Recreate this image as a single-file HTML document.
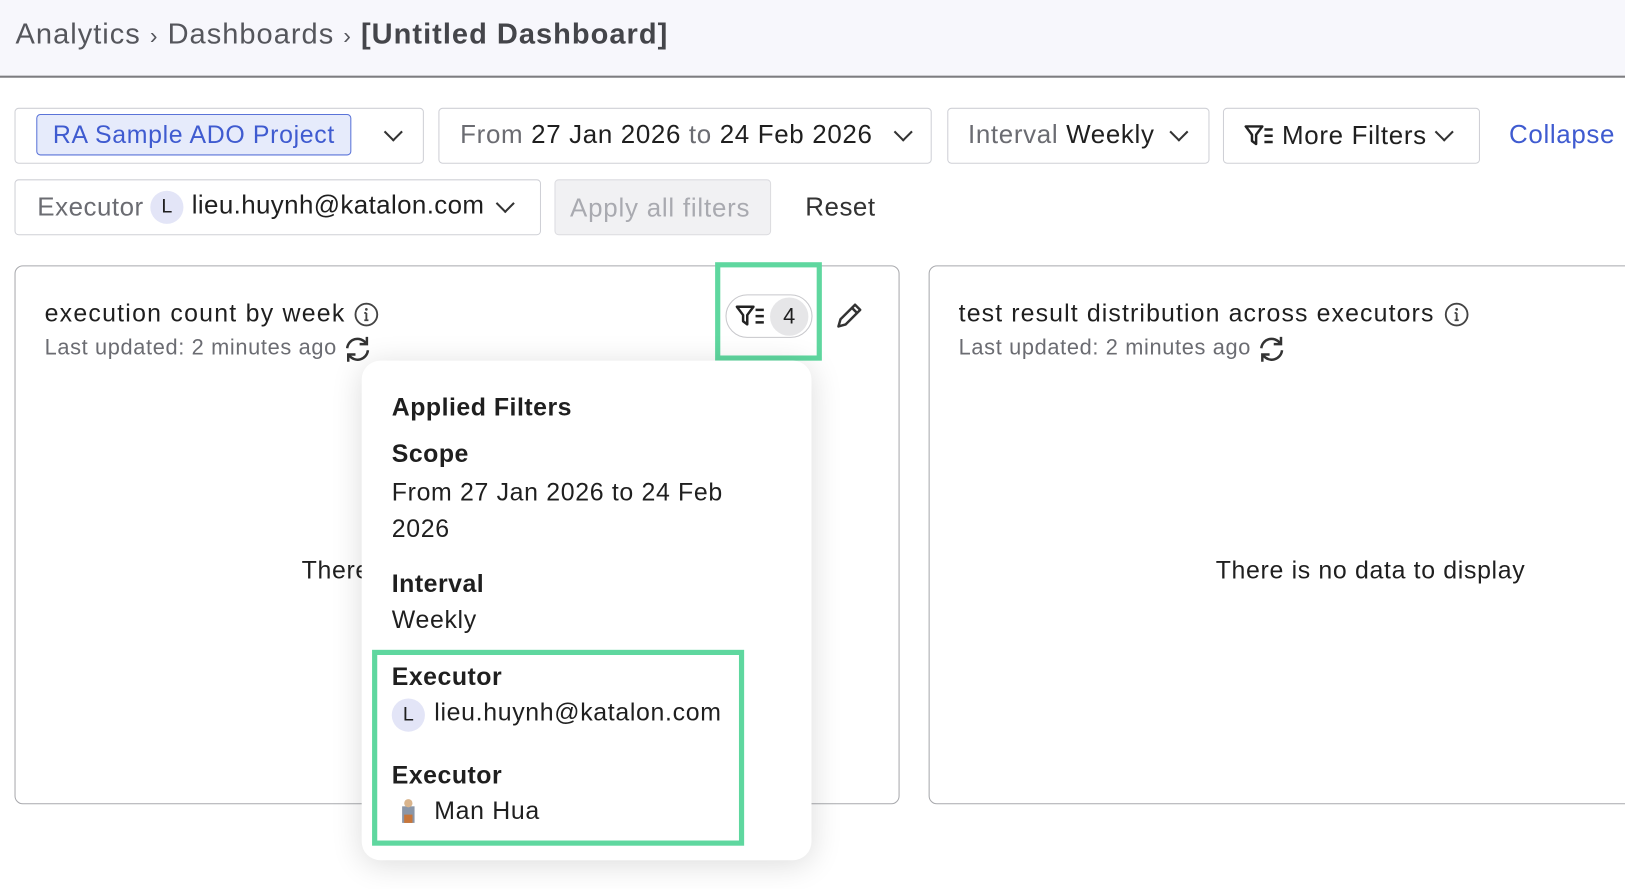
<!DOCTYPE html>
<html><head><meta charset="utf-8"><style>
html,body{margin:0;padding:0;width:1625px;height:889px;overflow:hidden;background:#fff;}
#w{position:absolute;left:0;top:0;width:1568px;height:858px;transform:scale(1.0364);transform-origin:0 0;font-family:"Liberation Sans",sans-serif;color:#1f1f1f;letter-spacing:0.04em;}
.a{position:absolute;white-space:nowrap;}
.box{position:absolute;border:1px solid #cfd0d6;border-radius:4px;background:#fff;box-sizing:border-box;}
.chev{position:absolute;width:11px;height:11px;border-right:2px solid #333;border-bottom:2px solid #333;transform:rotate(45deg);}
.g{color:#6b6c72}
</style></head><body><div id="w">
<div class="a" style="left:0;top:0;width:1568px;height:73px;background:#f7f7fc;border-bottom:2px solid #7d7d80;"></div>
<div class="a" style="left:15px;top:17px;font-size:28px;color:#55565c;letter-spacing:0.035em">Analytics <span style="font-size:22px">›</span> Dashboards <span style="font-size:22px">›</span> <b style="color:#44454a">[Untitled Dashboard]</b></div>

<div class="box" style="left:14px;top:104px;width:395px;height:54px"></div>
<div class="a" style="left:35px;top:110px;width:304px;height:40px;background:#e6ebfb;border:1px solid #5a73d8;border-radius:4px;box-sizing:border-box;color:#3f5bd0;font-size:24px;line-height:40px;padding-left:15px">RA Sample ADO Project</div>
<div class="chev" style="left:373px;top:121px"></div>

<div class="box" style="left:423px;top:104px;width:476px;height:54px"></div>
<div class="a" style="left:444px;top:116px;font-size:25px"><span class="g">From</span> 27 Jan 2026 <span class="g">to</span> 24 Feb 2026</div>
<div class="chev" style="left:865px;top:121px"></div>

<div class="box" style="left:914px;top:104px;width:253px;height:54px"></div>
<div class="a" style="left:934px;top:116px;font-size:25px"><span class="g">Interval</span> Weekly</div>
<div class="chev" style="left:1131px;top:121px"></div>

<div class="box" style="left:1180px;top:104px;width:248px;height:54px"></div>
<svg class="a" style="left:1200px;top:119px" width="30" height="24" viewBox="0 0 30 24"><path d="M2 3h16l-6 8v9l-4-3v-6z" fill="none" stroke="#222" stroke-width="2.4" stroke-linejoin="round"/><path d="M20 6h8M20 12h8M20 18h8" stroke="#222" stroke-width="2.4"/></svg>
<div class="a" style="left:1237px;top:117px;font-size:25px">More Filters</div>
<div class="chev" style="left:1387px;top:121px"></div>
<div class="a" style="left:1456px;top:116px;font-size:25px;color:#3f5bd0">Collapse</div>

<div class="box" style="left:14px;top:173px;width:508px;height:54px"></div>
<div class="a" style="left:36px;top:186px;font-size:25px;letter-spacing:0.02em" ><span class="g">Executor</span></div>
<div class="a" style="left:145px;top:184px;width:32px;height:32px;border-radius:50%;background:#e3e5f7;font-size:19px;line-height:32px;text-align:center;letter-spacing:0">L</div>
<div class="a" style="left:185px;top:184px;font-size:25px;letter-spacing:0.015em">lieu.huynh@katalon.com</div>
<div class="chev" style="left:481px;top:190px"></div>
<div class="a" style="left:535px;top:173px;width:209px;height:54px;background:#f1f1f3;border:1px solid #dcdce0;border-radius:4px;box-sizing:border-box;color:#a9aab0;font-size:25px;line-height:54px;padding-left:14px;letter-spacing:0.03em">Apply all filters</div>
<div class="a" style="left:777px;top:186px;font-size:25px;color:#333;letter-spacing:0.02em">Reset</div>

<div class="box" style="left:14px;top:256px;width:854px;height:520px;border-color:#a8a9ad;border-radius:8px"></div>
<div class="a" style="left:43px;top:289px;font-size:24px;letter-spacing:0.05em">execution count by week</div>
<svg class="a" style="left:341px;top:291px" width="25" height="25"><circle cx="12.5" cy="12.5" r="10.5" fill="none" stroke="#444" stroke-width="1.8"/><path d="M12.5 11v7M10.5 18h4M10.5 11h2" stroke="#444" stroke-width="1.8"/><circle cx="12.5" cy="7.5" r="1.3" fill="#444"/></svg>
<div class="a" style="left:43px;top:324px;font-size:21px;color:#6b6c72;letter-spacing:0.03em">Last updated: 2 minutes ago</div>
<svg class="a" style="left:331px;top:323px" width="28" height="28" viewBox="0 0 28 28"><path d="M4 13a10 10 0 0 1 18-5M24 15a10 10 0 0 1-18 5" fill="none" stroke="#333" stroke-width="2.4"/><path d="M23 2v7h-7M5 26v-7h7" fill="none" stroke="#333" stroke-width="2.4"/></svg>
<div class="a" style="left:291px;top:537px;font-size:24px">There</div>

<div class="a" style="left:690px;top:253px;width:103px;height:95px;border:5px solid #5fd79f;box-sizing:border-box"></div>
<div class="a" style="left:700px;top:284px;width:84px;height:42px;border:1px solid #c8c8cc;border-radius:21px;box-sizing:border-box"></div>
<svg class="a" style="left:709px;top:293px" width="30" height="24" viewBox="0 0 30 24"><path d="M2 3h16l-6 8v9l-4-3v-6z" fill="none" stroke="#222" stroke-width="2.4" stroke-linejoin="round"/><path d="M20 6h8M20 12h8M20 18h8" stroke="#222" stroke-width="2.4"/></svg>
<div class="a" style="left:743px;top:287px;width:37px;height:37px;border-radius:50%;background:#e6e6e8;text-align:center;line-height:37px;font-size:21px;letter-spacing:0">4</div>
<svg class="a" style="left:803px;top:289px" width="32" height="32" viewBox="0 0 32 32"><path d="M6 26l2-7L22 5l5 5L13 24z" fill="none" stroke="#333" stroke-width="2.4" stroke-linejoin="round"/><path d="M19 8l5 5" stroke="#333" stroke-width="2.4"/></svg>

<div class="box" style="left:896px;top:256px;width:700px;height:520px;border-color:#a8a9ad;border-radius:8px"></div>
<div class="a" style="left:925px;top:289px;font-size:24px;letter-spacing:0.045em">test result distribution across executors</div>
<svg class="a" style="left:1393px;top:291px" width="25" height="25"><circle cx="12.5" cy="12.5" r="10.5" fill="none" stroke="#444" stroke-width="1.8"/><path d="M12.5 11v7M10.5 18h4M10.5 11h2" stroke="#444" stroke-width="1.8"/><circle cx="12.5" cy="7.5" r="1.3" fill="#444"/></svg>
<div class="a" style="left:925px;top:324px;font-size:21px;color:#6b6c72;letter-spacing:0.03em">Last updated: 2 minutes ago</div>
<svg class="a" style="left:1213px;top:323px" width="28" height="28" viewBox="0 0 28 28"><path d="M4 13a10 10 0 0 1 18-5M24 15a10 10 0 0 1-18 5" fill="none" stroke="#333" stroke-width="2.4"/><path d="M23 2v7h-7M5 26v-7h7" fill="none" stroke="#333" stroke-width="2.4"/></svg>
<div class="a" style="left:1173px;top:537px;font-size:24px">There is no data to display</div>

<div class="a" style="left:349px;top:348px;width:434px;height:482px;background:#fff;border-radius:18px;box-shadow:0 4px 30px rgba(0,0,0,0.14)"></div>
<div class="a" style="left:378px;top:380px;font-size:24px;font-weight:bold;letter-spacing:0.02em">Applied Filters</div>
<div class="a" style="left:378px;top:425px;font-size:24px;font-weight:bold;letter-spacing:0.02em">Scope</div>
<div class="a" style="left:378px;top:458px;font-size:24px;line-height:35px;white-space:normal;width:345px">From 27 Jan 2026 to 24 Feb 2026</div>
<div class="a" style="left:378px;top:550px;font-size:24px;font-weight:bold;letter-spacing:0.02em">Interval</div>
<div class="a" style="left:378px;top:585px;font-size:24px">Weekly</div>
<div class="a" style="left:359px;top:627px;width:359px;height:189px;border:5px solid #5fd79f;box-sizing:border-box"></div>
<div class="a" style="left:378px;top:640px;font-size:24px;font-weight:bold;letter-spacing:0.02em">Executor</div>
<div class="a" style="left:378px;top:674px;width:32px;height:32px;border-radius:50%;background:#e3e5f7;font-size:19px;line-height:32px;text-align:center;letter-spacing:0">L</div>
<div class="a" style="left:419px;top:674px;font-size:24px">lieu.huynh@katalon.com</div>
<div class="a" style="left:378px;top:735px;font-size:24px;font-weight:bold;letter-spacing:0.02em">Executor</div>
<svg class="a" style="left:380px;top:766px" width="28" height="32"><rect x="8" y="12" width="12" height="16" fill="#8a96a8"/><circle cx="14" cy="9" r="4" fill="#d9b48c"/><rect x="10" y="20" width="8" height="8" fill="#c8763a"/></svg>
<div class="a" style="left:419px;top:769px;font-size:24px">Man Hua</div>
</div></body></html>
